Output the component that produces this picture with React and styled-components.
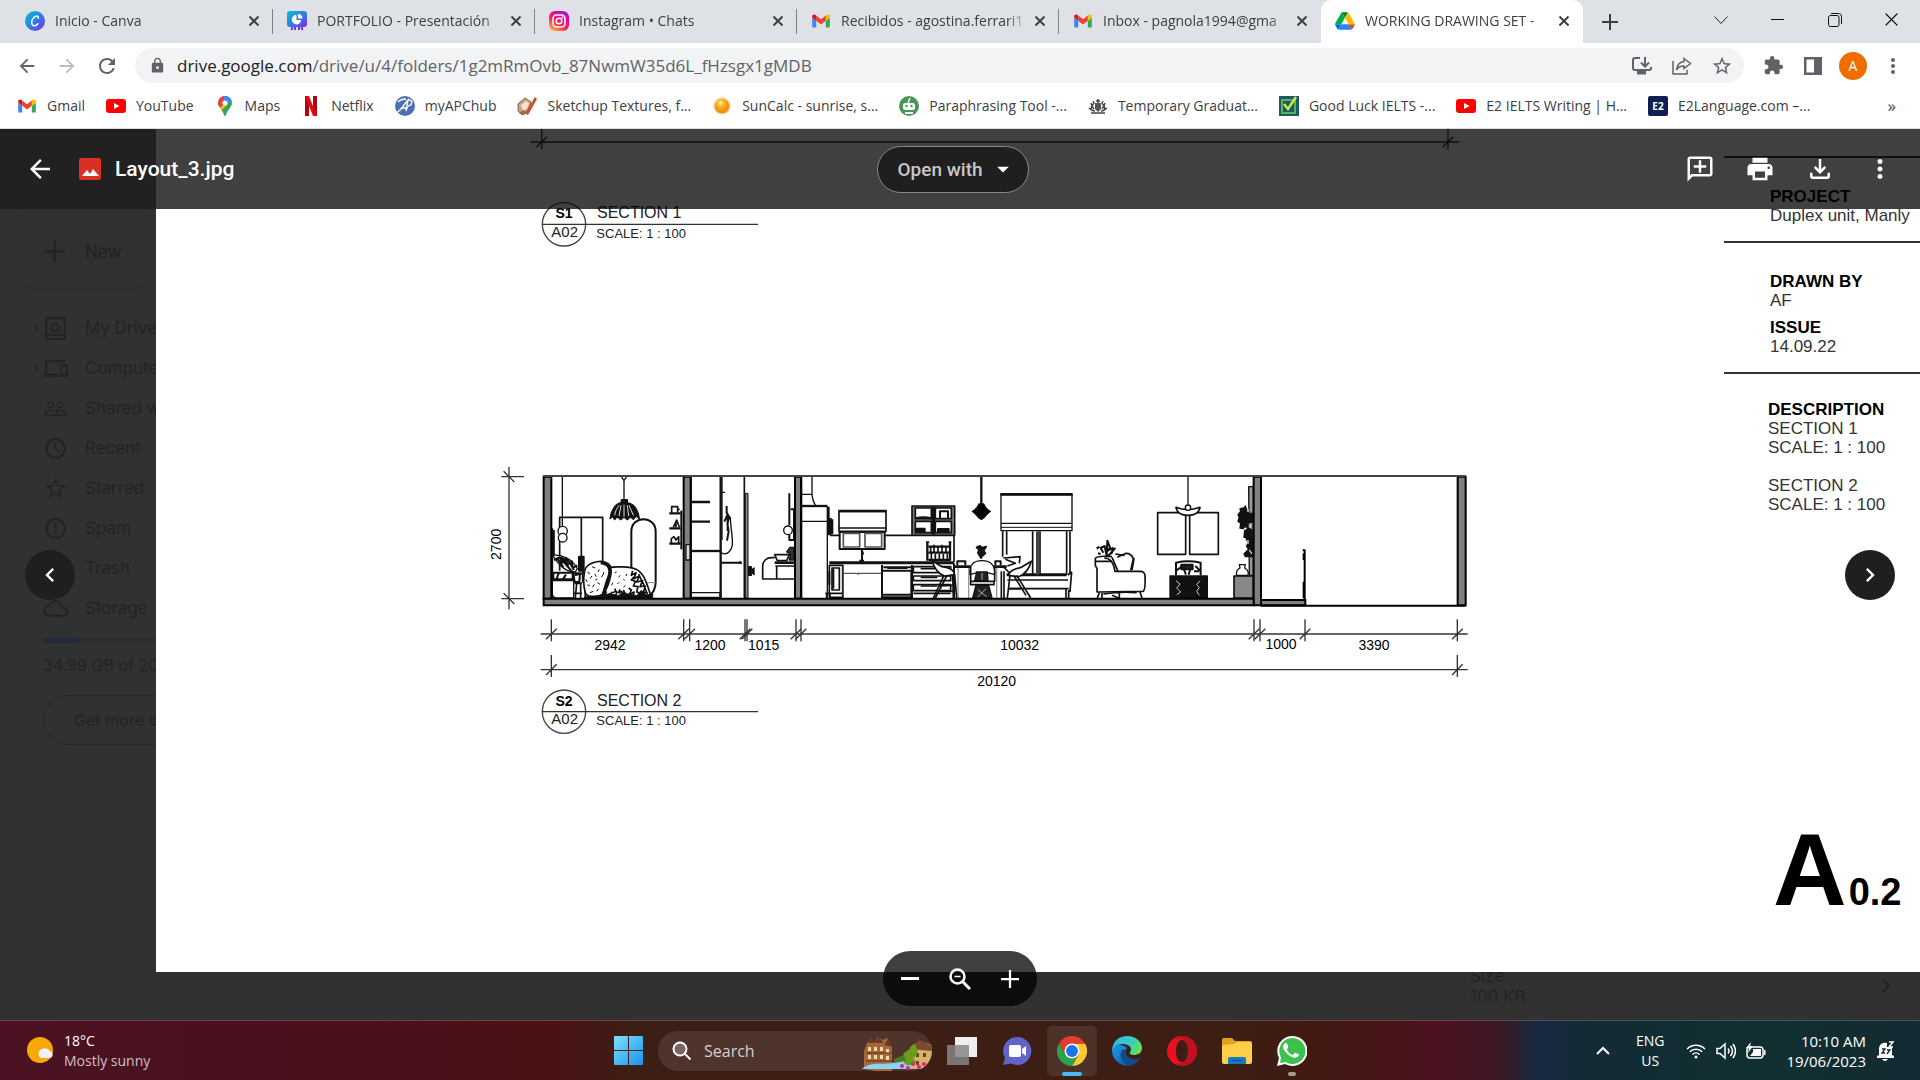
import React from "react";
import styled, { createGlobalStyle, css } from "styled-components";
import {
  MdAccessTime,
  MdArrowBack,
  MdArrowDropDown,
  MdArrowForward,
  MdArrowRight,
  MdChevronLeft,
  MdChevronRight,
  MdDevices,
  MdErrorOutline,
  MdExtension,
  MdLock,
  MdMoreVert,
  MdOutlineAddComment,
  MdOutlineCloud,
  MdOutlineFileDownload,
  MdPeopleOutline,
  MdPrint,
  MdRefresh,
  MdStarBorder,
} from "react-icons/md";

const GlobalStyle = createGlobalStyle`
  :root {
    --font-ui: "Open Sans", "Noto Sans", sans-serif;
    --font-product: Roboto, "Liberation Sans", sans-serif;
    --font-menu: Inter, Roboto, sans-serif;
    --font-sheet: "Liberation Sans", Arial, sans-serif;
    --fz-ui: 14px;
    --fz-md: 17px;
    --fz-lg: 21px;
  }

  * {
    box-sizing: border-box;
  }

  body {
    margin: 0;
    font-family: var(--font-ui);
    font-size: var(--fz-ui);
    overflow: hidden;
  }

  button {
    padding: 0;
    border: 0;
    background: none;
    color: inherit;
    font: inherit;
    cursor: pointer;
  }

  a {
    color: inherit;
    text-decoration: none;
  }

  svg {
    display: block;
    flex: none;
  }
`;

const flexCenter = css`
  display: flex;
  align-items: center;
  justify-content: center;
`;

const StyledScreen = styled.div`
  display: flex;
  flex-direction: column;
  height: 100vh;
  background: #303130;
`;

/* browser chrome */

const StyledTabStrip = styled.div`
  display: flex;
  height: 43px;
  padding-left: 11px;
  background: #dee1e6;
`;

const StyledTab = styled.div`
  display: flex;
  align-items: center;
  flex: 0 1 262px;
  min-width: 0;
  padding: 0 11px 2px 14px;
  position: relative;
  color: #3c4043;
  background: ${({ $active }) => ($active ? "#fff" : "transparent")};
  border-radius: 10px 10px 0 0;

  &:after {
    content: "";
    display: ${({ $divider }) => ($divider ? "block" : "none")};
    position: absolute;
    right: 0;
    top: 9px;
    width: 1px;
    height: 25px;
    background: #808387;
  }

  span {
    flex: 1;
    margin: 0 5px 0 10px;
    overflow: hidden;
    white-space: nowrap;
    mask-image: linear-gradient(to left, transparent 0, #000 20px);
  }
`;

const StyledTabButton = styled.button`
  ${flexCenter};
  width: ${({ $size }) => $size || 16}px;
  color: #3c4043;
`;

const StyledWindowControls = styled.div`
  display: flex;
  align-items: center;
  margin-left: auto;
  height: 39px;

  button {
    ${flexCenter};
    width: 57px;
    height: 39px;
  }
`;

const StyledToolbar = styled.div`
  display: flex;
  align-items: center;
  height: 45px;
  padding: 0 7px;
  background: #fff;
  color: #5f6368;
`;

const StyledToolButton = styled.button`
  ${flexCenter};
  width: 40px;
  height: 40px;
  color: ${({ $muted }) => ($muted ? "#babcbe" : "#5f6368")};
`;

const StyledAddress = styled.div`
  display: flex;
  align-items: center;
  flex: 1;
  height: 35px;
  margin: 0 9px 0 8px;
  padding: 0 2px 0 14px;
  border-radius: 18px;
  background: #f1f3f4;

  p {
    flex: 1;
    margin: 0 0 0 11px;
    font-size: var(--fz-md);
    color: #5f6368;
  }

  b {
    font-weight: 400;
    color: #202124;
  }
`;

const StyledAvatar = styled.button`
  ${flexCenter};
  width: 28px;
  height: 28px;
  margin: 0 6px;
  border-radius: 50%;
  background: #ef6c00;
  color: #fff;
`;

const StyledBookmarks = styled.nav`
  display: flex;
  align-items: center;
  gap: 1px;
  height: 41px;
  padding: 0 24px 5px 7px;
  border-bottom: 1px solid #dadce0;
  background: #fff;
  color: #3c4043;

  a {
    display: flex;
    align-items: center;
    gap: 10px;
    padding: 0 10px;
    white-space: nowrap;
  }

  button {
    margin-left: auto;
    font-size: var(--fz-md);
  }
`;

/* drive viewer */

const StyledViewer = styled.main`
  position: relative;
  flex: 1;
  min-height: 0;
  display: grid;
  grid-template-columns: 156px 1fr;
  grid-template-rows: 1fr 48px;
`;

const StyledSidebar = styled.aside`
  grid-row: 1 / 3;
  overflow: hidden;
  padding-top: 80px;
  background: #303231;
  color: #222423;
  font-family: var(--font-menu);
  font-size: var(--fz-md);

  ul {
    margin: 20px 0 0;
    padding: 0;
    list-style: none;
  }

  li a {
    display: flex;
    align-items: center;
    height: 40px;
    padding-left: 29px;
    white-space: nowrap;
  }
`;

const StyledNewButton = styled.button`
  display: flex;
  align-items: center;
  gap: 20px;
  width: 132px;
  height: 79px;
  margin-left: 18px;
  padding: 6px 0 0 26px;
  border-radius: 20px;
  background: #303030;
  box-shadow: 0 1px 3px #2a2b2a;
  font-weight: 500;
`;

const StyledArrowSlot = styled.span`
  flex: none;
  width: 14px;
`;

const StyledMenuLabel = styled.span`
  margin-left: 17px;
`;

const StyledQuota = styled.div`
  width: 240px;
  padding: 10px 0 0 43px;
  font-size: 16px;

  progress {
    display: block;
    width: 100%;
    height: 5px;
    border: 0;
    border-radius: 2px;
    overflow: hidden;
    appearance: none;
  }

  progress::-webkit-progress-bar {
    background: #2c2d2e;
  }

  progress::-webkit-progress-value {
    background: #24283f;
  }

  p {
    margin: 12px 0 20px;
    line-height: 20px;
    white-space: nowrap;
  }

  button {
    height: 50px;
    width: 100%;
    padding-left: 30px;
    border: 1px solid #272928;
    border-radius: 25px;
    color: #22252e;
    font-weight: 500;
    text-align: left;
  }
`;

const StyledPaper = styled.article`
  display: flex;
  justify-content: space-between;
  min-width: 0;
  overflow: hidden;
  padding-left: 324px;
  background: #fff;
  font-family: var(--font-sheet);
  color: #000;
`;

const StyledTitleBlock = styled.div`
  display: flex;
  flex-direction: column;
  width: 196px;
  padding-top: 27px;
  font-size: var(--fz-md);
  line-height: 19px;
  white-space: nowrap;

  section {
    padding: 29px 0 16px 46px;
    border-top: 2px solid #333;
  }

  section + section + section {
    padding: 26px 0 0 44px;
  }

  dl {
    margin: 0;
  }

  dl + dl {
    margin-top: 8px;
  }

  dt {
    font-weight: 700;
  }

  dd {
    margin: 0;
    color: #333;
  }

  dd + dd.group {
    margin-top: 19px;
  }
`;

const StyledSheetNumber = styled.p`
  margin: auto 0 21px 49px;
  font-size: 102px;
  line-height: 117px;
  font-weight: 700;

  small {
    margin-left: 2px;
    font-size: 38px;
  }
`;

const StyledDetails = styled.div`
  display: flex;
  align-items: flex-start;
  justify-content: space-between;
  padding: 0 20px 0 1314px;
  font-family: var(--font-menu);
  font-size: var(--fz-md);
  line-height: 21px;
  color: #232323;

  p {
    display: flex;
    align-items: center;
    height: 29px;
    margin: 0;
    overflow: hidden;
    white-space: nowrap;
  }
`;

const StyledHeader = styled.header`
  position: absolute;
  inset: 0 0 auto 0;
  display: grid;
  grid-template-columns: 1fr auto 1fr;
  align-items: center;
  height: 80px;
  padding: 0 25px 0 11px;
  background: linear-gradient(to right, #212121 156px, rgba(0, 0, 0, 0.75) 156px);
  color: #fff;
  font-family: var(--font-product);
`;

const StyledFileName = styled.div`
  display: flex;
  align-items: center;
  padding-left: 14px;

  h1 {
    margin: 0 0 0 12px;
    font-size: var(--fz-lg);
    font-weight: 500;
  }

  button {
    margin-right: 23px;
  }
`;

const StyledOpenWith = styled.button`
  display: flex;
  align-items: center;
  gap: 6px;
  height: 47px;
  padding: 0 11px 0 19px;
  border: 1px solid #8a8a8a;
  border-radius: 24px;
  background: #1f1f1f;
  color: #c7c7c7;
  font-size: 19px;
  font-weight: 500;

  svg {
    color: #fff;
  }
`;

const StyledActions = styled.div`
  display: flex;
  justify-content: flex-end;
  gap: 30px;
`;

const StyledPageArrow = styled.button`
  ${flexCenter};
  position: absolute;
  top: 421px;
  ${({ $side }) => $side}: 25px;
  width: 50px;
  height: 50px;
  border-radius: 50%;
  background: #1f1f1f;
  color: #fff;
`;

const StyledZoom = styled.div`
  position: absolute;
  bottom: 14px;
  left: 50%;
  transform: translateX(-50%);
  display: flex;
  align-items: center;
  height: 55px;
  padding: 0 2px;
  border-radius: 28px;
  background: rgba(0, 0, 0, 0.75);
  color: #fff;

  button {
    ${flexCenter};
    width: 50px;
    height: 50px;
  }
`;

/* windows taskbar */

const StyledTaskbar = styled.footer`
  display: grid;
  grid-template-columns: 1fr auto 1fr;
  align-items: center;
  height: 60px;
  border-top: 1px solid rgba(255, 255, 255, 0.2);
  background: linear-gradient(
    to right,
    #4b1223 0,
    #48111a 22%,
    #4b1214 29%,
    #3c1e14 33%,
    #3c1e14 64%,
    #431713 70%,
    #4c1220 75%,
    #3c1823 78%,
    #192840 80%,
    #132b35 83%,
    #112f30 92%,
    #132b33 100%
  );
  color: #fff;
  line-height: 20px;
`;

const StyledWeather = styled.button`
  display: flex;
  align-items: center;
  gap: 9px;
  padding-left: 27px;
  text-align: left;

  span {
    display: block;
    color: #d2bfc4;
  }
`;

const StyledApps = styled.div`
  display: flex;
  align-items: center;
  gap: 5px;
`;

const StyledApp = styled.button`
  ${flexCenter};
  position: relative;
  width: 50px;
  height: 50px;
  border-radius: 5px;
  background: ${({ $open }) => ($open ? "rgba(255, 255, 255, 0.09)" : "none")};

  &:after {
    content: "";
    display: ${({ $mark }) => ($mark ? "block" : "none")};
    position: absolute;
    bottom: 0;
    width: ${({ $mark }) => $mark}px;
    height: 4px;
    border-radius: 2px;
    background: ${({ $open }) => ($open ? "#4cb8f5" : "#a89a96")};
  }
`;

const StyledSearch = styled.label`
  display: flex;
  align-items: center;
  width: 274px;
  height: 40px;
  padding-left: 14px;
  border-radius: 20px;
  overflow: hidden;
  background: #4e342c;

  input {
    flex: 1;
    min-width: 0;
    margin-left: 13px;
    padding: 0;
    border: 0;
    outline: 0;
    background: none;
    font: inherit;
    font-size: 16px;
  }

  input::placeholder {
    color: #d8cfcc;
  }
`;

const StyledTray = styled.div`
  display: flex;
  align-items: center;
  justify-content: flex-end;
  padding-right: 24px;

  p {
    margin: 0;
  }
`;

const StyledTrayIcons = styled.div`
  display: flex;
  align-items: center;
  gap: 10px;
  margin: 0 20px 0 22px;
`;

const StyledLanguage = styled.p`
  padding-left: 26px;
  text-align: center;
`;

const StyledClock = styled.p`
  padding-right: 10px;
  font-size: 15px;
  text-align: right;
`;

/* logos */

const GmailLogo = () => (
  <svg width='20' height='20' viewBox='46 36 100 78'>
    <path fill='#4285f4' d='M58 108h14V74L52 59v43c0 3.3 2.7 6 6 6' />
    <path fill='#34a853' d='M120 108h14a6 6 0 0 0 6-6V59l-20 15' />
    <path fill='#fbbc04' d='M120 48v26l20-15v-8c0-7.4-8.5-11.6-14.4-7.2' />
    <path fill='#ea4335' d='M72 74V48l24 18 24-18v26L96 92' />
    <path fill='#c5221f' d='M52 51v8l20 15V48l-5.6-4.2C60.5 39.4 52 43.6 52 51' />
  </svg>
);

const DriveLogo = () => (
  <svg width='20' height='20' viewBox='0 0 88 78'>
    <path fill='#0066da' d='M6.6 66.9l3.8 6.6c.8 1.4 2 2.5 3.3 3.3L27.5 53H0c0 1.6.4 3.1 1.2 4.5z' />
    <path fill='#00ac47' d='M43.7 25L29.9 1.2c-1.4.8-2.5 1.9-3.3 3.3L1.2 48.5A9 9 0 0 0 0 53h27.5z' />
    <path fill='#ea4335' d='M73.6 76.8c1.3-.8 2.5-1.9 3.3-3.3l9.2-16c.8-1.4 1.2-2.9 1.2-4.5H59.8l5.9 11.5z' />
    <path fill='#00832d' d='M43.7 25L57.4 1.2C56.1.4 54.5 0 52.9 0H34.4c-1.6 0-3.1.4-4.5 1.2z' />
    <path fill='#2684fc' d='M59.8 53H27.5L13.7 76.8c1.3.8 2.9 1.2 4.5 1.2h50.9c1.6 0 3.1-.4 4.5-1.2z' />
    <path fill='#ffba00' d='M73.4 26.5L60.7 4.5c-.8-1.4-2-2.5-3.3-3.3L43.7 25l16.1 28h27.5c0-1.6-.4-3.1-1.2-4.5z' />
  </svg>
);

const CanvaLogo = () => (
  <svg width='20' height='20' viewBox='0 0 20 20'>
    <defs>
      <linearGradient id='canva' x1='0' y1='0' x2='1' y2='1'>
        <stop offset='0' stopColor='#00c4cc' />
        <stop offset='.5' stopColor='#2f7fe8' />
        <stop offset='1' stopColor='#7d2ae8' />
      </linearGradient>
    </defs>
    <circle cx='10' cy='10' r='10' fill='url(#canva)' />
    <path
      d='M13.3 7.2c.5-1.8-1-2.6-2.4-2C8 6.3 6.5 9.5 6.7 12c.2 3.2 3.7 3.7 6.3.8'
      fill='none'
      stroke='#fff'
      strokeWidth='1.5'
      strokeLinecap='round'
    />
  </svg>
);

const SlidesLogo = () => (
  <svg width='20' height='20' viewBox='0 0 20 20'>
    <path d='M6 14l-1.5 5M14 14l1.5 5M8 14v5M12 14v5' stroke='#6f35e4' strokeWidth='2' />
    <rect width='20' height='16' rx='3' fill='url(#canva)' />
    <path d='M9.5 3.8A4.8 4.8 0 1 0 14.3 9H9.5z' fill='#fff' />
    <path d='M11 3v4.5h4.5A4.7 4.7 0 0 0 11 3z' fill='#fff' />
  </svg>
);

const InstagramLogo = () => (
  <svg width='20' height='20' viewBox='0 0 20 20'>
    <defs>
      <linearGradient id='insta' x1='.1' y1='1' x2='.8' y2='0'>
        <stop offset='0' stopColor='#ffc93c' />
        <stop offset='.4' stopColor='#ff2b4f' />
        <stop offset='.75' stopColor='#e3009e' />
        <stop offset='1' stopColor='#a21be0' />
      </linearGradient>
    </defs>
    <rect width='20' height='20' rx='6' fill='url(#insta)' />
    <g fill='none' stroke='#fff' strokeWidth='1.5'>
      <rect x='4' y='4' width='12' height='12' rx='3.5' />
      <circle cx='10' cy='10' r='2.8' />
    </g>
    <circle cx='13.4' cy='6.6' r='1' fill='#fff' />
  </svg>
);

const YouTubeLogo = () => (
  <svg width='20' height='20' viewBox='0 0 20 20'>
    <rect y='3' width='20' height='14' rx='3' fill='#f00' />
    <path d='M8 7l5.5 3L8 13z' fill='#fff' />
  </svg>
);

const MapsLogo = () => (
  <svg width='20' height='20' viewBox='0 0 20 20'>
    <clipPath id='pin'>
      <path d='M10 0a7 7 0 0 1 7 7c0 3-2 4.8-3.8 7.2C11.6 16.4 11 20 10 20s-1.6-3.6-3.2-5.8C5 11.8 3 10 3 7a7 7 0 0 1 7-7z' />
    </clipPath>
    <g clipPath='url(#pin)'>
      <path d='M0 0h20v20H0z' fill='#34a853' />
      <path d='M0 10L10 0h10v4L10 7 3 14z' fill='#4285f4' />
      <path d='M2 14l6-7 3 3-7 7z' fill='#fbbc04' />
      <path d='M0 0h9l1 7-4 4-6-5z' fill='#ea4335' />
      <path d='M10-1h8v3l-8 5-2-2z' fill='#4285f4' />
    </g>
    <circle cx='10' cy='7' r='2.6' fill='#fff' />
  </svg>
);

const NetflixLogo = () => (
  <svg width='20' height='20' viewBox='0 0 20 20'>
    <path d='M4 0h4v20l-4 .3zM12 0h4v20.3L12 20z' fill='#b1060f' />
    <path d='M4 0h4l8 20.3-4-.3z' fill='#e50914' />
  </svg>
);

const ApcLogo = () => (
  <svg width='20' height='20' viewBox='0 0 20 20'>
    <circle cx='10' cy='10' r='10' fill='#4d6fb3' />
    <path
      d='M1 17C6 15 9 8 13 4l-2 11M6 12h7M13 4c5-1 5 5 0 6M3 6c3-3 6-3 8-3'
      fill='none'
      stroke='#fff'
      strokeWidth='1.4'
    />
  </svg>
);

const SketchLogo = () => (
  <svg width='20' height='20' viewBox='0 0 20 20'>
    <path d='M1 8l7-6 6 4-2 9-7 4-4-4z' fill='#c9a27e' stroke='#7e6a5a' />
    <path d='M4 9l5-4 3 2-2 6-4 2z' fill='#f2e3cf' />
    <path d='M8 17L18 1l2 2-9 16z' fill='#c4532e' />
    <path d='M2 17l5-3 3 4-5 1z' fill='#8b6f58' />
  </svg>
);

const SunLogo = () => (
  <svg width='20' height='20' viewBox='0 0 20 20'>
    <defs>
      <radialGradient id='sun' cx='.4' cy='.3'>
        <stop offset='0' stopColor='#fff3a8' />
        <stop offset='.5' stopColor='#fcb51c' />
        <stop offset='1' stopColor='#ef9310' />
      </radialGradient>
    </defs>
    <circle cx='10' cy='10' r='9' fill='#fde3bd' />
    <circle cx='10' cy='10' r='7.5' fill='url(#sun)' />
  </svg>
);

const QuillLogo = () => (
  <svg width='20' height='20' viewBox='0 0 20 20'>
    <circle cx='10' cy='10' r='10' fill='#499557' />
    <path d='M11 2L9 7' stroke='#fff' strokeWidth='1.5' />
    <rect x='4' y='7' width='12' height='7' rx='2' fill='#fff' />
    <circle cx='7.5' cy='10' r='1.2' fill='#499557' />
    <circle cx='12.5' cy='10' r='1.2' fill='#499557' />
    <path d='M6 16h8v2H6z' fill='#fff' />
  </svg>
);

const CrestLogo = () => (
  <svg width='20' height='20' viewBox='0 0 20 20'>
    <path d='M7 7h6v6l-3 3-3-3z' fill='#555' />
    <g fill='none' stroke='#444' strokeWidth='1.4'>
      <path d='M7 15c-3 0-5-2-3-5L3 7M6 13l-2-3 2-3-1-2M13 15c3 0 5-2 3-5l1-3M14 13l2-3-2-3 1-2M1 12l4 3M19 12l-4 3M3 17h14' />
      <path d='M10 3v4M8 5h4' />
    </g>
  </svg>
);

const IeltsLogo = () => (
  <svg width='20' height='20' viewBox='0 0 20 20'>
    <path d='M0 0h20v20H0z' fill='#1d5c66' />
    <path d='M3 4h13v13H3z' fill='none' stroke='#5fae5d' strokeWidth='2' />
    <path d='M5 8l4 5 8-12' fill='none' stroke='#d4e64a' strokeWidth='2.5' />
  </svg>
);

const StyledE2 = styled.span`
  ${flexCenter};
  width: 20px;
  height: 20px;
  border-radius: 2px;
  background: #0e2050;
  color: #fff;
  font-size: 10px;
  font-weight: 700;
`;

const bookmarks = [
  { name: "Gmail", icon: <GmailLogo /> },
  { name: "YouTube", icon: <YouTubeLogo /> },
  { name: "Maps", icon: <MapsLogo /> },
  { name: "Netflix", icon: <NetflixLogo /> },
  { name: "myAPChub", icon: <ApcLogo /> },
  { name: "Sketchup Textures, f...", icon: <SketchLogo /> },
  { name: "SunCalc - sunrise, s...", icon: <SunLogo /> },
  { name: "Paraphrasing Tool -...", icon: <QuillLogo /> },
  { name: "Temporary Graduat...", icon: <CrestLogo /> },
  { name: "Good Luck IELTS -...", icon: <IeltsLogo /> },
  { name: "E2 IELTS Writing | H...", icon: <YouTubeLogo /> },
  { name: "E2Language.com –...", icon: <StyledE2>E2</StyledE2> },
];

const tabs = [
  { title: "Inicio - Canva", icon: <CanvaLogo /> },
  { title: "PORTFOLIO - Presentación", icon: <SlidesLogo /> },
  { title: "Instagram • Chats", icon: <InstagramLogo /> },
  { title: "Recibidos - agostina.ferrari1", icon: <GmailLogo /> },
  { title: "Inbox - pagnola1994@gma", icon: <GmailLogo /> },
  { title: "WORKING DRAWING SET -", icon: <DriveLogo />, active: true },
];

const Cross = ({ size = 10, width = 2 }) => (
  <svg width={size} height={size} viewBox='0 0 10 10' stroke='currentColor' strokeWidth={width}>
    <path d='M.5 .5l9 9M9.5 .5l-9 9' />
  </svg>
);

const Plus = ({ size = 16, width = 2 }) => (
  <svg width={size} height={size} viewBox='0 0 16 16' stroke='currentColor' strokeWidth={width}>
    <path d='M8 0v16M0 8h16' />
  </svg>
);

const Browser = () => (
  <>
    <StyledTabStrip>
      {tabs.map(({ title, icon, active }, i) => (
        <StyledTab key={title} $active={active} $divider={i < 4}>
          {icon}
          <span>{title}</span>
          <StyledTabButton aria-label={`Close ${title}`}>
            <Cross />
          </StyledTabButton>
        </StyledTab>
      ))}
      <StyledTabButton $size={54} aria-label='New tab'>
        <Plus />
      </StyledTabButton>
      <StyledWindowControls>
        <button aria-label='Search tabs'>
          <svg width='14' height='8' viewBox='0 0 14 8' fill='none' stroke='#222'>
            <path d='M.5 .5L7 7.5l6.5-7' />
          </svg>
        </button>
        <button aria-label='Minimize'>
          <svg width='13' height='2' viewBox='0 0 13 2' fill='#111'>
            <path d='M0 0h13v1H0z' />
          </svg>
        </button>
        <button aria-label='Restore'>
          <svg width='14' height='14' viewBox='0 0 14 14' fill='none' stroke='#111'>
            <rect x='.5' y='2.5' width='10.5' height='11' rx='2' />
            <path d='M3 .5h7.5a3 3 0 0 1 3 3V11' />
          </svg>
        </button>
        <button aria-label='Close window'>
          <Cross size={13} width={1} />
        </button>
      </StyledWindowControls>
    </StyledTabStrip>
    <StyledToolbar>
      <StyledToolButton aria-label='Back'>
        <MdArrowBack size={22} />
      </StyledToolButton>
      <StyledToolButton $muted aria-label='Forward'>
        <MdArrowForward size={22} />
      </StyledToolButton>
      <StyledToolButton aria-label='Reload'>
        <MdRefresh size={24} />
      </StyledToolButton>
      <StyledAddress>
        <MdLock size={17} />
        <p>
          <b>drive.google.com</b>/drive/u/4/folders/1g2mRmOvb_87NwmW35d6L_fHzsgx1gMDB
        </p>
        <StyledToolButton aria-label='Install'>
          <svg width='20' height='18' viewBox='0 0 20 18' fill='none' stroke='currentColor' strokeWidth='2'>
            <path d='M8 1H3a2 2 0 0 0-2 2v8a2 2 0 0 0 2 2h14a2 2 0 0 0 2-2v-1M13 0v9M9 5.5L13 9.5l4-4' />
            <path d='M5 15.5h9' strokeWidth='4' />
          </svg>
        </StyledToolButton>
        <StyledToolButton aria-label='Share'>
          <svg width='20' height='18' viewBox='0 0 20 18' fill='none' stroke='currentColor' strokeWidth='1.5'>
            <path d='M1 4v13h14v-4' />
            <path d='M12 1.5l6.5 5-6.5 5V9c-3.5 0-6 1-7.5 4 .5-4.5 3-8 7.5-8.500z' />
          </svg>
        </StyledToolButton>
        <StyledToolButton aria-label='Bookmark'>
          <MdStarBorder size={22} />
        </StyledToolButton>
      </StyledAddress>
      <StyledToolButton aria-label='Extensions'>
        <MdExtension size={21} />
      </StyledToolButton>
      <StyledToolButton aria-label='Side panel'>
        <svg width='18' height='18' viewBox='0 0 18 18'>
          <path d='M0 0h18v18H0zM2.5 2.5v13H10v-13z' fill='currentColor' fillRule='evenodd' />
        </svg>
      </StyledToolButton>
      <StyledAvatar>A</StyledAvatar>
      <StyledToolButton aria-label='Menu'>
        <MdMoreVert size={24} />
      </StyledToolButton>
    </StyledToolbar>
    <StyledBookmarks>
      {bookmarks.map(({ name, icon }) => (
        <a href='#bookmark' key={name}>
          {icon}
          {name}
        </a>
      ))}
      <button>»</button>
    </StyledBookmarks>
  </>
);

const menu = [
  {
    name: "My Drive",
    arrow: true,
    icon: (
      <svg width='25' height='25' viewBox='0 0 24 24' fill='none' stroke='currentColor' strokeWidth='2'>
        <path d='M3 2h18v20H3zM3 18h18M9.5 14L8 11.5 11 7h2l3 4.5-1.5 2.5z' />
      </svg>
    ),
  },
  { name: "Computers", arrow: true, icon: <MdDevices size={25} /> },
  { name: "Shared with me", icon: <MdPeopleOutline size={25} /> },
  { name: "Recent", icon: <MdAccessTime size={25} /> },
  { name: "Starred", icon: <MdStarBorder size={25} /> },
  { name: "Spam", icon: <MdErrorOutline size={25} /> },
  { name: "Trash", icon: <svg width='25' height='25' /> },
  { name: "Storage", icon: <MdOutlineCloud size={25} /> },
];

const Sidebar = () => (
  <StyledSidebar>
    <StyledNewButton>
      <Plus size={21} />
      New
    </StyledNewButton>
    <ul>
      {menu.map(({ name, arrow, icon }) => (
        <li key={name}>
          <a href='#menu'>
            <StyledArrowSlot>{arrow && <MdArrowRight size={16} />}</StyledArrowSlot>
            {icon}
            <StyledMenuLabel>{name}</StyledMenuLabel>
          </a>
        </li>
      ))}
    </ul>
    <StyledQuota>
      <progress max='200' value='37' aria-label='Storage used' />
      <p>34.99 GB of 200 GB used</p>
      <button>Get more storage</button>
    </StyledQuota>
  </StyledSidebar>
);

/* section drawing, three units to the pixel */

const TitleMark = ({ id, title, y }) => (
  <g transform={`translate(252 ${y})`}>
    <circle r='65' fill='none' stroke='#444' strokeWidth='4' />
    <path d='M-65 0H582' stroke='#333' strokeWidth='4' />
    <text x='0' y='-18' fontSize='42' fontWeight='700' textAnchor='middle'>
      {id}
    </text>
    <text x='2' y='37' fontSize='45' textAnchor='middle' fill='#222'>
      A02
    </text>
    <text x='99' y='-18' fontSize='48' fill='#222'>
      {title}
    </text>
    <text x='97' y='41' fontSize='39' fill='#222'>
      SCALE: 1 : 100
    </text>
  </g>
);

const Dimension = ({ y, from, to, ticks }) => (
  <g stroke='#333' strokeWidth='4'>
    <path d={`M${from} ${y}H${to}`} />
    {ticks.map((x) => (
      <path key={x} d={`M${x} ${y - 44}V${y + 22}M${x - 16} ${y + 16}l32-32`} />
    ))}
  </g>
);

const dimensionLabels = [
  [390, 600, "2942"],
  [690, 600, "1200"],
  [851, 600, "1015"],
  [1619, 600, "10032"],
  [2403, 597, "1000"],
  [2682, 600, "3390"],
  [1550, 708, "20120"],
];

const Bedroom = () => (
  <g>
    <path d='M247 80v152M432 92v58M424 80l8 12 8-12' />
    <path d='M239 362V202h129v140M304 202v125' strokeWidth='5' />
    <circle cx='248' cy='243' r='14' fill='#fff' />
    <circle cx='248' cy='263' r='13' fill='#fff' />
    <path d='M390 206c4-28 18-46 34-48v-9h18v9c18 3 32 20 36 48l-10-8-8 10-9-8-9 9-10-9-10 9-10-9-8 9-6-10z' fill='#111' />
    <path d='M404 196c2-14 8-24 14-30M417 198l6-32M432 200v-36M446 198l-4-32M460 196l-13-30' stroke='#ddd' strokeWidth='3' />
    <path d='M454 360V245c0-50 73-50 73 0v150c0 20-8 34-20 42' strokeWidth='6' />
    <path d='M497 398h30' stroke='#888' strokeWidth='3' />
    {/* shelves */}
    <path d='M568 190h34M568 235h34M568 281h34' strokeWidth='7' />
    <path d='M604 182v116' strokeWidth='6' />
    <path d='M575 188v-18h18v18M593 178h6M580 232l10-22 8 22M574 280v-14l8-6 6 10 8-10v20M588 232v-14' strokeWidth='5' />
    {/* nightstand and pillows */}
    <path d='M217 235v210M222 240v80' strokeWidth='5' />
    <path d='M217 392h64v52h-55q-8-2-9-12z' fill='#fff' />
    <path d='M218 316c28-4 60 12 74 40l-6 10c-24 0-42-10-68-50z' fill='#fff' />
    <path d='M222 330l18-8 6 16 12-14 4 20 14-10 2 20 14-8M230 322l20 30M245 320l26 40M262 326l20 34M236 320l40 44' strokeWidth='6' />
    <path d='M220 368h58v20h-58zM230 386l6-16M250 386l8-12M280 370h20l-2 26h-14z' strokeWidth='6' />
    <path d='M297 320h14v42h-14z' strokeWidth='6' fill='#111' />
    <path d='M284 376l30-8M284 400h22M282 430h24M290 400l-4 44M302 400v44M308 364v34' strokeWidth='5' />
    {/* bed cover */}
    <path d='M380 354c30-6 70-4 88 4 26 12 34 48 46 84H316l-2-60z' fill='#fff' strokeWidth='5' />
    <path d='M314 362c8-30 64-36 76-16 10 20-6 72-24 88-20 10-48 6-50-6-6-20-6-44-2-66z' fill='#fff' strokeWidth='5' />
    <path d='M362 338c28 4 34 22 20 54-6 18-8 30-14 44' strokeWidth='9' />
    <path
      d='M322 366l8 6M336 350l10 4M330 386l6-8M344 372l5 8M358 358l-4 8M322 404l8 4M338 412l5-9M352 398l8 5M330 428l10-4M350 424l6-8M364 382l5-8M318 388l4 8M346 390l6-3M372 366l-3 9'
      strokeWidth='3'
    />
    <path d='M392 378l-4 8M404 368l6-2M420 376l-4 6M398 398l-3 8M412 402l5-5M430 388l4 3M440 372l-2 6M436 406l-5 6' strokeWidth='3' />
    <path
      d='M458 362l-4 14 14-8-6 18 16-8-8 18 18-4-8 18 16-2-6 18 14 4M462 380l-8 10 12 4-6 14 14 2-4 16 14 4M446 414l8 6-6 14 14-8-2 14M430 420l4 8-8 10M412 424l-6 14M396 426l-8 12M380 424l-8 14M476 372l10 22M488 396l14 36M420 418l-4 10 10-4M404 416l4 8-10 4'
      strokeWidth='5'
    />
    <path d='M312 442h206v-10l-20 3-14-14-14 16-30-6-12-6-12 12-28-6-22 6-26 2z' fill='#111' strokeWidth='3' />
  </g>
);

const Bathroom = () => (
  <g>
    <path d='M632 80v364M722 80v364M636 156h54M636 215h54' strokeWidth='7' />
    <path d='M634 303h90' strokeWidth='7' />
    <path d='M724 338h62M780 334v8' strokeWidth='6' />
    <path d='M634 428h86v14h-86' />
    <path d='M726 80v190M726 127h9' />
    <path d='M740 168v20l8 14-6 18 4 24-5 28M733 215l10-22v50' strokeWidth='6' />
    <path d='M751 200c0 30 8 60 6 84-4 26-22 32-32 24' />
    <path d='M793 80v364' strokeWidth='5' />
    <path d='M796 130h8v314h-8z' fill='#888' strokeWidth='3' />
    <path d='M806 350h8v26h-8zM812 362l10-8v20z' fill='#111' />
    <path d='M928 130v96M932 178h10v92h-14v-16M942 180v90' strokeWidth='6' />
    <circle cx='924' cy='241' r='13' fill='#fff' />
    <path d='M942 387h-94v-40c2-14 12-24 26-24h10' strokeWidth='5' />
    <path d='M884 314h44l-8 18h-28zM890 346v41M886 348h56' strokeWidth='5' fill='#fff' />
    <path d='M884 338h58' strokeWidth='8' />
    <path d='M930 292l-10 14 12 6-4 18h14v-38z' fill='#333' />
  </g>
);

const Kitchen = () => (
  <g transform='translate(960 0)'>
    <path d='M36 80v54q2 20 10 32M6 133h30M82 168v276M6 214h76' />
    <path d='M6 168h76' strokeWidth='7' />
    <path d='M86 170v86M92 204v50M97 208v44' strokeWidth='6' />
    <path d='M4 80v364' strokeWidth='6' />
    <path d='M117 184h141v60H117z' fill='#fff' strokeWidth='5' />
    <path d='M115 183h145' strokeWidth='8' />
    <path d='M117 234h141M90 256h28M256 256h80M462 256v80' strokeWidth='5' />
    <path d='M119 246h135v51H119z' strokeWidth='6' />
    <path d='M130 250h49v41h-49zM195 250h50v41h-50z' strokeWidth='5' stroke='#555' />
    <path d='M186 334v-34q-4-8 4 14M178 332h14' strokeWidth='6' />
    {/* wall cabinet */}
    <path d='M336 168h128v88H336z' fill='#777' strokeWidth='5' />
    <path d='M346 174h48v32h-48zM406 174h48v32h-48zM346 214h48v34h-48zM406 214h48v34h-48z' fill='#fff' strokeWidth='5' />
    <path d='M346 205q24-6 48 0M420 204v-20h24v20' strokeWidth='6' />
    <path d='M350 246v-10h24v10zM414 246v-9h32v9z' fill='#111' strokeWidth='6' />
    <path d='M400 170v84' strokeWidth='10' />
    {/* dish rack */}
    <path d='M382 276v56M450 276v56M386 290h64M386 308h64M386 330h64' strokeWidth='7' />
    <path d='M392 290v20M402 284v24M414 290v18M426 284v24M438 290v18M394 310v20M406 312v18M418 312v18M430 312v18M442 312v18M378 276h10M446 276h8' strokeWidth='5' />
    <path d='M88 338h374' strokeWidth='9' />
    <path d='M88 346h40v96H88zM96 354h22v66H96zM76 430h50M80 444v-14M90 428v16' strokeWidth='5' />
    <path d='M88 364v40M100 356v60' strokeWidth='6' />
    <path d='M130 370h114M130 345v99M172 372h5' stroke='#555' />
    <path d='M246 345v99M246 362h88v80h-88M246 434h88M250 352h84M262 354h60M336 345v99M462 340v104' strokeWidth='6' />
    <path d='M340 350h112v18H340zM340 378h112v14H340zM340 404h112v18H340z' strokeWidth='5' />
    <path d='M362 356h50M362 382h50M362 408h50M340 430h112' strokeWidth='5' />
  </g>
);

const Dining = () => (
  <g transform='translate(960 0)'>
    <path d='M544 80v84' strokeWidth='7' />
    <path d='M517 184q14-6 20-22h14q6 16 20 22-10 8-20 20l-7 4-7-4q-10-12-20-20z' fill='#000' />
    {/* window bench */}
    <path d='M603 134h213v108H603zM603 220h213' fill='#fff' />
    <path d='M601 133h217' strokeWidth='8' />
    <path d='M603 232h213' strokeWidth='3' />
    <path d='M608 244v76M620 244v70M698 244v130M720 244v130M800 244v130M810 244v130' strokeWidth='5' />
    <path d='M620 374h180' strokeWidth='9' />
    <path d='M713 244v130' strokeWidth='10' stroke='#444' />
    <path d='M610 324l50-4-2 20M616 328l30 12-24 8M604 364v80M612 364v80M622 390h182M626 416h180M804 376q14-20 10 0l-4 50M798 418v26M806 420v24M612 352l20 20' strokeWidth='5' />
    {/* table */}
    <path d='M460 350h52M580 350h40' strokeWidth='8' />
    <path d='M472 346v-12h24v12M586 346v-12h16v12' strokeWidth='6' />
    <path d='M506 354v90M474 354v90M590 354v90' stroke='#999' />
    <path d='M544 326v-34M538 300l-8-8 10-4 6 6 12-4-8 12 6 8-14 12-8-14z' fill='#222' strokeWidth='6' />
    {/* chairs */}
    <path d='M396 332l30 18q36 4 38 24l-30 4q-26-8-38-46z' fill='#fff' strokeWidth='5' />
    <path d='M432 376l-32 68M440 378l-34 66M464 374l6 70M458 376l2 68M418 408l44-2M418 424h40' strokeWidth='5' />
    <path d='M510 374q-4-42 36-42t38 42q-38-14-74 0z' fill='#fff' />
    <path d='M512 352v42h72v-42M512 394v10h70v-10' strokeWidth='5' />
    <path d='M524 392l6-26h32l2 26zM528 406l-10 38h58l-10-38z' fill='#222' />
    <path d='M546 368v22M534 420l26 20M558 416l-26 26' stroke='#aaa' strokeWidth='3' />
    <path d='M694 334l-30 18q-36 8-38 24l30 4q28-10 38-46z' fill='#fff' strokeWidth='5' />
    <path d='M650 376l42 68M642 378l36 58M630 376l-8 68M626 416h40' strokeWidth='5' />
  </g>
);

const LivingRoom = () => (
  <g transform='translate(1920 0)'>
    {/* sofa and plant */}
    <path
      d='M-24 320q-46-4-50 6v20l5 10v70h2l136-2q8-2 6-48-2-12-14-12h-76q-6-40-32-40'
      fill='#fff'
      strokeWidth='5'
    />
    <path d='M-74 334h50M-24 322l18 42M-8 322l26-12q16 0 22 16l-8 36M36 322l6 4-6 34M-14 312l28 4' strokeWidth='5' />
    <path d='M-62 428l-6 16M-54 428v16M60 426l6 18M-2 430v14M-24 436l20 8M-50 432q50-8 100-4' strokeWidth='5' />
    <path d='M-40 318l-6-30-12 6 8 14M-40 318l2-46 8 20-6 10 14-8-2 14-14 10M-62 290l-8 6M-58 312l-8-2M-34 316l20-22' strokeWidth='6' />
    {/* pendant and frames */}
    <path d='M204 80v86' />
    <path d='M113 188h84v125h-84zM209 188h86v125h-86z' strokeWidth='5' />
    <path d='M168 172q34 14 72 0-4 24-36 24t-36-24z' fill='#fff' strokeWidth='5' />
    <circle cx='204' cy='173' r='8' fill='#fff' />
    {/* fireplace */}
    <path d='M150 378h112v66H150z' fill='#111' />
    <path d='M168 376v-38q36-8 74 0v38M168 362l20-14M240 362l-14-14' strokeWidth='6' />
    <path d='M184 344h34v14h-34zM190 354l8 20M212 354l-6 20M222 364h16' fill='#222' strokeWidth='6' />
    <path d='M168 392l12 10-10 12 12 12-12 8M240 392l-10 12 8 8-8 12 8 12' stroke='#ccc' strokeWidth='3' />
    {/* console */}
    <path d='M342 378h58v66h-58z' fill='#888' strokeWidth='5' />
    <path d='M350 376q-4-14 10-22l-2-10h18l-2 10q14 8 10 22z' fill='#fff' />
    <path d='M386 110h14v266h-12z' fill='#999' />
    <path
      d='M376 168l-4 6-12 2 2 8-8 10 4 8-4 12 8 6-2 14 10 2 4-6 8 2 2-14 14-2v-26h-14zM374 242l8-4v-6l14 8v22h-24zM378 266l6 10-4 14 6 8-14 14 4 8h22v-54z'
      fill='#111'
    />
    <path d='M384 176v10M390 222v12M388 300l8 12M384 270v12' stroke='#ddd' />
  </g>
);

const SectionDrawing = () => (
  <svg
    width='1020'
    height='621'
    viewBox='0 -963 3060 1863'
    fill='none'
    stroke='none'
    fontFamily='"Liberation Sans", Arial, sans-serif'
  >
    <g fill='#000'>
      <Dimension y={-924} from={153} to={2937} ticks={[185, 2904]} />
      <TitleMark id='S1' title='SECTION 1' y={-677} />
      <TitleMark id='S2' title='SECTION 2' y={785} />
      <Dimension y={552} from={182} to={2963} ticks={[214, 611, 629, 795, 801, 948, 963, 2322, 2340, 2475, 2932]} />
      <Dimension y={659} from={182} to={2963} ticks={[214, 2932]} />
      {dimensionLabels.map(([x, y, label]) => (
        <text key={label} x={x} y={y} fontSize='42' textAnchor='middle'>
          {label}
        </text>
      ))}
      <text transform='translate(62 283) rotate(-90)' fontSize='42' textAnchor='middle'>
        2700
      </text>
    </g>
    <path d='M87 50v428M64 80h68M64 446h68M71 64l32 32M71 430l32 32' stroke='#333' strokeWidth='4' />
    <g stroke='#111' strokeWidth='4' strokeLinejoin='round'>
      <Bedroom />
      <Bathroom />
      <Kitchen />
      <Dining />
      <LivingRoom />
    </g>
    {/* walls and slab */}
    <g fill='#808080' stroke='#000' strokeWidth='6'>
      <path d='M191 80h23v366H191zM611 80h21v366h-21zM945 80h18v366h-18zM2321 80h22v386h-22zM2933 80h24v386h-24z' />
      <path d='M191 446h2130v20H191zM2343 450h133v16h-133z' />
      <path d='M2474 300v150M2468 301h8M2471 310v20M2471 395v50' />
      <path d='M2343 467h614' />
    </g>
    <path d='M618 284h12v46h-12z' fill='#ddd' stroke='#111' strokeWidth='4' />
    <path d='M190 78h2767' stroke='#444' strokeWidth='6' />
  </svg>
);

const Sheet = () => (
  <StyledPaper>
    <SectionDrawing />
    <StyledTitleBlock>
      <section>
        <dl>
          <dt>PROJECT</dt>
          <dd>Duplex unit, Manly</dd>
        </dl>
      </section>
      <section>
        <dl>
          <dt>DRAWN BY</dt>
          <dd>AF</dd>
        </dl>
        <dl>
          <dt>ISSUE</dt>
          <dd>14.09.22</dd>
        </dl>
      </section>
      <section>
        <dl>
          <dt>DESCRIPTION</dt>
          <dd>SECTION 1</dd>
          <dd>SCALE: 1 : 100</dd>
          <dd className='group'>SECTION 2</dd>
          <dd>SCALE: 1 : 100</dd>
        </dl>
      </section>
      <StyledSheetNumber>
        A<small>0.2</small>
      </StyledSheetNumber>
    </StyledTitleBlock>
  </StyledPaper>
);

const Viewer = () => (
  <StyledViewer>
    <Sidebar />
    <Sheet />
    <StyledDetails>
      <p>
        Size
        <br />
        100 KB
      </p>
      <MdChevronRight size={28} />
    </StyledDetails>
    <StyledHeader>
      <StyledFileName>
        <button aria-label='Close viewer'>
          <MdArrowBack size={30} />
        </button>
        <svg width='25' height='25' viewBox='0 0 25 25'>
          <rect x='1' y='1' width='22' height='22' rx='2' fill='#d93025' />
          <path d='M4 19l5-6 3 4 3-5 6 7z' fill='#fff' />
        </svg>
        <h1>Layout_3.jpg</h1>
      </StyledFileName>
      <StyledOpenWith>
        Open with
        <MdArrowDropDown size={28} />
      </StyledOpenWith>
      <StyledActions>
        <button aria-label='Add comment'>
          <MdOutlineAddComment size={30} transform='scale(-1 1)' />
        </button>
        <button aria-label='Print'>
          <MdPrint size={30} />
        </button>
        <button aria-label='Download'>
          <MdOutlineFileDownload size={30} />
        </button>
        <button aria-label='More actions'>
          <MdMoreVert size={30} />
        </button>
      </StyledActions>
    </StyledHeader>
    <StyledPageArrow $side='left' aria-label='Previous'>
      <MdChevronLeft size={28} />
    </StyledPageArrow>
    <StyledPageArrow $side='right' aria-label='Next'>
      <MdChevronRight size={28} />
    </StyledPageArrow>
    <StyledZoom>
      <button aria-label='Zoom out'>
        <svg width='18' height='3' viewBox='0 0 18 3'>
          <path d='M0 0h18v3H0z' fill='currentColor' />
        </svg>
      </button>
      <button aria-label='Reset zoom'>
        <svg width='22' height='22' viewBox='0 0 22 22' fill='none' stroke='currentColor' strokeWidth='2.5'>
          <circle cx='8.5' cy='8.5' r='7' />
          <path d='M13.5 13.5l7.5 7.5' strokeWidth='3' />
          <path d='M5.5 8.5h6' strokeWidth='1.5' />
        </svg>
      </button>
      <button aria-label='Zoom in'>
        <Plus size={18} />
      </button>
    </StyledZoom>
  </StyledViewer>
);

const TownArt = () => (
  <svg width='70' height='40' viewBox='0 0 70 40'>
    <path d='M2 38V20l3-8 4-5 3 5 4-6 5 3 4-2 5 8v28z' fill='#a5683a' />
    <path d='M5 12l4-5 3 5zM12 12l5-6 5 6zM22 14l4-6 5 8z' fill='#6d3a20' />
    <path d='M6 16h3v4H6zM12 16h3v4h-3zM18 16h3v4h-3zM24 18h3v4h-3zM6 24h3v4H6zM12 24h3v4h-3zM18 24h3v4h-3zM24 25h3v4h-3z' fill='#f3d9a6' />
    <path d='M4 22h26M4 30h26' stroke='#5b2e1a' />
    <path d='M48 38V16l10-6 12 4v24z' fill='#d8b26c' />
    <path d='M46 18l12-9 12 6v5z' fill='#7b4a2b' />
    <path d='M54 22h3v4h-3zM61 22h3v4h-3zM54 30h3v4h-3z' fill='#6b4326' />
    <path d='M0 38c8-8 20-4 30-6s14-4 24-2l-6 8z' fill='#8bd3ee' />
    <path d='M42 30c-4-6 2-10 6-12 2-6 6-6 6-2 4 4 0 10-3 12 5 1 3 7-2 6-4 1-7 0-7-4z' fill='#6d9c1d' />
    <path d='M32 28l10-4 2 6-12 2z' fill='#4e7a22' />
    <g fill='#e0218a'>
      <circle cx='40' cy='35' r='2' />
      <circle cx='46' cy='37' r='2' />
      <circle cx='51' cy='33' r='2' />
      <circle cx='57' cy='36' r='2' />
      <circle cx='62' cy='33' r='2' />
    </g>
  </svg>
);

const ChromeLogo = () => (
  <svg width='30' height='30' viewBox='0 0 48 48'>
    <path d='M24 12h20.8A24 24 0 0 1 24 48l10.4-18z' fill='#fcc934' />
    <path d='M13.6 30L3.2 12A24 24 0 0 0 24 48l10.4-18z' fill='#2ba24c' />
    <path d='M24 12h20.8A24 24 0 0 0 3.2 12l10.4 18z' fill='#e33b2e' />
    <circle cx='24' cy='24' r='12' fill='#fff' />
    <circle cx='24' cy='24' r='9.5' fill='#1a73e8' />
  </svg>
);

const EdgeLogo = () => (
  <svg width='30' height='30' viewBox='0 0 30 30'>
    <defs>
      <linearGradient id='edgeTop' x1='0' y1='.2' x2='1' y2='.6'>
        <stop offset='0' stopColor='#2fb6e8' />
        <stop offset='.6' stopColor='#35cfc0' />
        <stop offset='1' stopColor='#6ee04f' />
      </linearGradient>
      <linearGradient id='edgeLow' x1='0' y1='0' x2='1' y2='1'>
        <stop offset='0' stopColor='#1b9de2' />
        <stop offset='1' stopColor='#0c4fa3' />
      </linearGradient>
    </defs>
    <path d='M0 14a15 15 0 0 0 28 8c-4 2-8 2-11 0-4-2-5-7-2-10-5-5-14-3-15 2z' fill='url(#edgeLow)' />
    <path d='M10 14c-4 7 1 14 8 16 4-1 8-4 10-8-7 3-13 0-14-5-.3-2 0-3 1-4z' fill='#114a8b' />
    <path d='M0 14C1 5 7 0 15 0c9 0 15 6 15 12 0 5-4 7-8 7-3 0-5-1-4-3 3-4-1-8-7-8C6 8 2 10 0 14z' fill='url(#edgeTop)' />
  </svg>
);

const apps = [
  {
    name: "Task view",
    icon: (
      <svg width='30' height='28' viewBox='0 0 30 28'>
        <path d='M8 0h22v20H8z' fill='#eee' />
        <path d='M0 8h22v20H0z' fill='#858585' fillOpacity='.85' />
      </svg>
    ),
  },
  {
    name: "Chat",
    icon: (
      <svg width='30' height='30' viewBox='0 0 30 30'>
        <path d='M15 1a14 14 0 1 1-6 26.5L1 29l2-7A14 14 0 0 1 15 1z' fill='#6264c7' />
        <rect x='7' y='9' width='12' height='12' rx='2' fill='#fff' />
        <path d='M20 13l4-3v10l-4-3z' fill='#fff' />
      </svg>
    ),
  },
  { name: "Chrome", icon: <ChromeLogo />, open: true, mark: 20 },
  { name: "Edge", icon: <EdgeLogo /> },
  {
    name: "Opera",
    icon: (
      <svg width='30' height='30' viewBox='0 0 30 30'>
        <path
          d='M15 0a15 15 0 1 0 0 30 15 15 0 0 0 0-30zm0 4c4 0 6 5 6 11s-2 11-6 11-6-5-6-11 2-11 6-11z'
          fill='#e81123'
          fillRule='evenodd'
        />
        <path d='M15 0a15 15 0 0 1 0 30c-3 0-5-2-6-4 9 4 12-3 12-11S18 0 9 4c1-2 3-4 6-4z' fill='#c01020' />
      </svg>
    ),
  },
  {
    name: "File Explorer",
    icon: (
      <svg width='30' height='28' viewBox='0 0 30 28'>
        <path d='M0 3a2 2 0 0 1 2-2h8l3 3h15a2 2 0 0 1 2 2v6H0z' fill='#e3a21a' />
        <path d='M0 8l12-1 3-2h13a2 2 0 0 1 2 2v18a2 2 0 0 1-2 2H2a2 2 0 0 1-2-2z' fill='#ffcf48' />
        <path d='M6 27v-5a2 2 0 0 1 2-2h14a2 2 0 0 1 2 2v5z' fill='#1779c4' />
        <path d='M10 23h10v1H10z' fill='#0b4f8a' />
      </svg>
    ),
  },
  {
    name: "WhatsApp",
    mark: 8,
    icon: (
      <svg width='30' height='30' viewBox='0 0 30 30'>
        <path d='M15 0a15 15 0 1 1-7 28l-8 2 2-8A15 15 0 0 1 15 0z' fill='#fff' />
        <path d='M15 2a13 13 0 1 1-6.5 24L3 27l1-5.5A13 13 0 0 1 15 2z' fill='#3cc14e' />
        <path
          d='M21.5 18.3l-3-1.4c-.5-.2-.8 0-1 .3l-1.2 1.5c-.3.3-.6.3-1 .1-2.6-1.2-4-2.5-5.3-4.9-.3-.5 0-.8.3-1.1l.9-1.3c.1-.3.1-.5 0-.8l-1.2-3c-.3-.7-.7-.7-1.2-.7-.6 0-1.1.2-1.5.7-2 2.2-1.2 4.8.2 6.8 2 3.1 4.5 5.4 8 6.7 2.3.9 4 .7 5.5-.6 1-.9 1.1-1.9.5-2.3z'
          fill='#fff'
        />
      </svg>
    ),
  },
];

const Taskbar = () => (
  <StyledTaskbar>
    <StyledWeather>
      <svg width='28' height='28' viewBox='0 0 28 28'>
        <circle cx='13' cy='13' r='13' fill='#f9a80c' />
        <path d='M14 21a5 5 0 0 1 1-9 6 6 0 0 1 8 2 4 4 0 0 1 1 7z' fill='#eef2fa' />
      </svg>
      <div>
        18°C
        <span>Mostly sunny</span>
      </div>
    </StyledWeather>
    <StyledApps>
      <StyledApp aria-label='Start'>
        <svg width='29' height='29' viewBox='0 0 29 29'>
          <defs>
            <linearGradient id='win' x1='0' y1='0' x2='1' y2='1'>
              <stop offset='0' stopColor='#7fe0fb' />
              <stop offset='1' stopColor='#1793f0' />
            </linearGradient>
          </defs>
          <path d='M0 1q0-1 1-1h13v14H0zM15 0h13q1 0 1 1v13H15zM0 15h14v14H1q-1 0-1-1zM15 15h14v13q0 1-1 1H15z' fill='url(#win)' />
        </svg>
      </StyledApp>
      <StyledSearch>
        <svg width='19' height='19' viewBox='0 0 19 19' fill='#7a6560' stroke='#fff' strokeWidth='2'>
          <circle cx='8' cy='8' r='6.5' />
          <path d='M12.5 12.5l6 6' />
        </svg>
        <input type='text' placeholder='Search' aria-label='Search' />
        <TownArt />
      </StyledSearch>
      {apps.map(({ name, icon, open, mark }) => (
        <StyledApp key={name} aria-label={name} $open={open} $mark={mark}>
          {icon}
        </StyledApp>
      ))}
    </StyledApps>
    <StyledTray>
      <svg width='14' height='9' viewBox='0 0 14 9' fill='none' stroke='#fff' strokeWidth='2'>
        <path d='M1 8l6-6 6 6' />
      </svg>
      <StyledLanguage>
        ENG
        <br />
        US
      </StyledLanguage>
      <StyledTrayIcons>
        <svg width='20' height='16' viewBox='0 0 20 16' fill='none' stroke='#fff' strokeWidth='1.5'>
          <path d='M1 6a12.5 12.5 0 0 1 18 0M3.8 8.8a9 9 0 0 1 12.4 0M6.5 11.5a5 5 0 0 1 7 0' />
          <circle cx='10' cy='14' r='1.5' fill='#fff' stroke='none' />
        </svg>
        <svg width='20' height='18' viewBox='0 0 20 18' fill='none' stroke='#fff' strokeWidth='1.5'>
          <path d='M1 6.5h3l5-4.5v14l-5-4.5H1zM12 6.5q2 2.5 0 5M14.5 4q4 5 0 10M17 2q5 7 0 14' />
        </svg>
        <svg width='20' height='18' viewBox='0 0 20 18' fill='#fff'>
          <rect x='1' y='5' width='16' height='11' rx='3' fill='none' stroke='#fff' strokeWidth='1.5' />
          <path d='M7 7h8v7H4l3-4zM18 8h1.5v5H18zM5 0L0 6h3l-1 5 5-7H4z' />
        </svg>
      </StyledTrayIcons>
      <StyledClock>
        10:10 AM
        <br />
        19/06/2023
      </StyledClock>
      <svg width='20' height='20' viewBox='0 0 20 20' fill='#fff'>
        <path d='M3 14V8a6 6 0 0 1 8-6v4h5v8l2 1v2H1v-2zM6 18h6q-3 4-6 0z' />
        <path d='M13 1h4l-4 5h4' fill='none' stroke='#fff' strokeWidth='1.5' />
        <path d='M6 8h3l-3 4h3M11 9h3l-3 4' fill='none' stroke='#132b33' strokeWidth='1.3' />
      </svg>
    </StyledTray>
  </StyledTaskbar>
);

const App = () => (
  <>
    <GlobalStyle />
    <StyledScreen>
      <Browser />
      <Viewer />
      <Taskbar />
    </StyledScreen>
  </>
);

export default App;
